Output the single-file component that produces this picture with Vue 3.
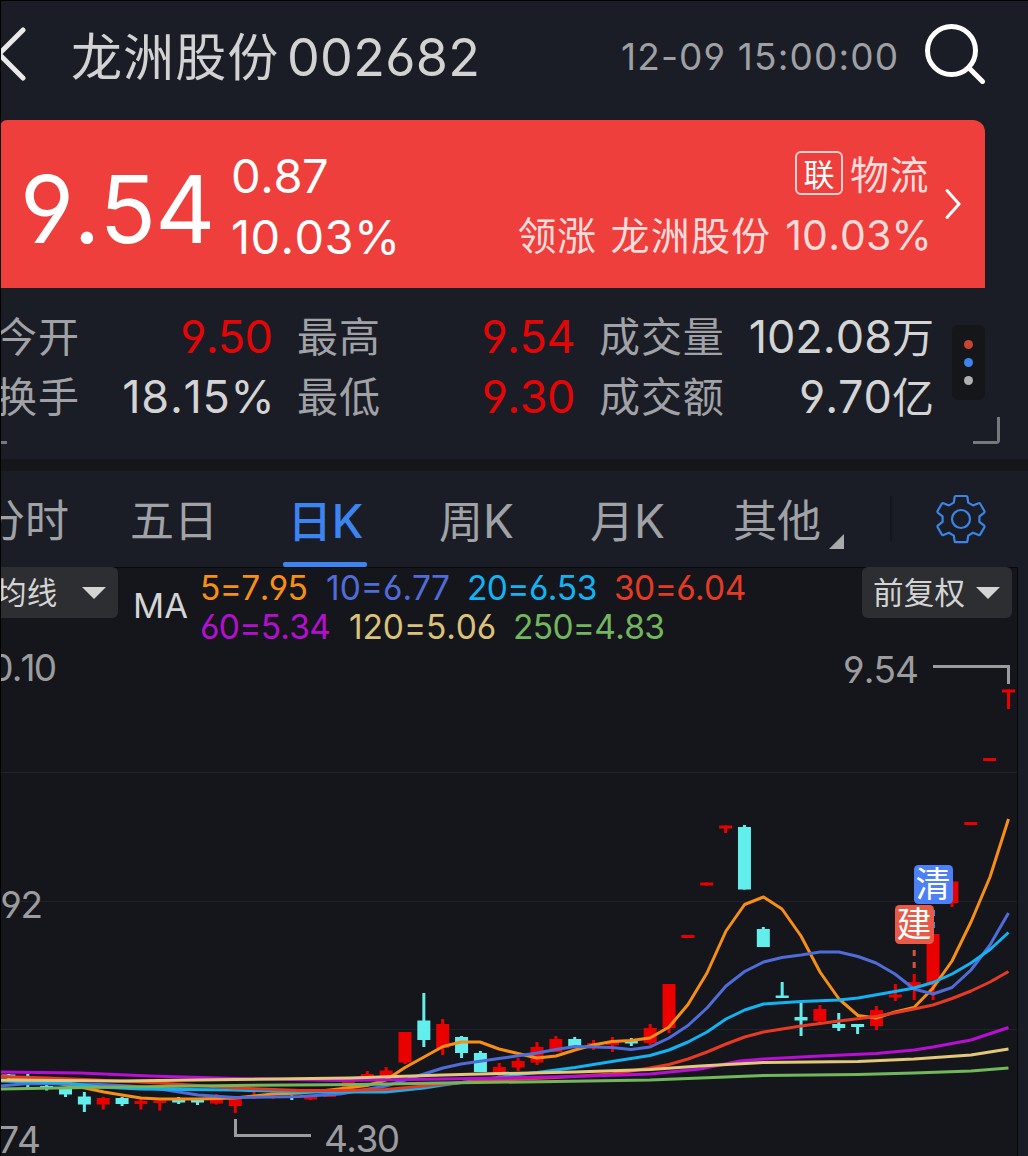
<script setup>
const UP = '#eb0000'
const DOWN = '#63eeee'

const LAST_X = 1008.5
const STEP = 18.86

// [high, bodyTop, bodyBottom, low, rising], oldest first
const raw = [
  [1074, 1074.5, 1077, 1079, 0], [1074, 1078, 1080, 1087, 0], [1084.5, 1086, 1088, 1090.5, 0],
  [1089, 1089, 1094.5, 1097, 0], [1092, 1096.5, 1104.5, 1112, 0], [1097, 1098, 1104.5, 1109.5, 1],
  [1097, 1098, 1104, 1106, 0], [1099, 1101, 1104, 1109.5, 1], [1101, 1100.5, 1103, 1110.5, 1],
  [1097, 1100, 1102.5, 1104, 0], [1100, 1100, 1102.5, 1105, 0], [1094, 1099, 1103.5, 1104.5, 1],
  [1099, 1099, 1106, 1113, 1], [1092, 1095, 1098, 1099, 1], [1095, 1096, 1098, 1099, 1],
  [1095, 1096, 1098, 1100, 0], [1096, 1096, 1099.5, 1100, 1], [1093, 1093, 1097, 1097, 1],
  [1080, 1080, 1090, 1090, 1], [1071, 1074, 1078, 1078, 1], [1067, 1070.5, 1077, 1077, 1],
  [1032, 1032, 1062.5, 1064, 1], [993, 1020.5, 1040, 1047, 0], [1019, 1024, 1048, 1055, 1],
  [1036, 1037, 1053, 1058, 0], [1051, 1053, 1072, 1072, 0], [1063, 1067, 1072, 1076, 1],
  [1058, 1061, 1067.5, 1071, 1], [1042, 1047, 1062.5, 1065, 1], [1036, 1039, 1052, 1052, 1],
  [1037, 1039, 1046, 1048, 0], [1040, 1043, 1046, 1050, 1], [1037, 1042, 1045, 1052, 1],
  [1038, 1041, 1043.5, 1046, 0], [1024, 1028, 1043, 1045, 1], [984, 984, 1028, 1033, 1],
  [935, 935, 938, 938, 1], [882.5, 882.5, 885.5, 885.5, 1], [825.5, 825.5, 828.5, 833, 1],
  [825, 827, 889.5, 889.5, 0], [927, 929, 947, 947, 0], [982, 995.5, 998, 998, 0],
  [1002, 1017, 1020.5, 1036, 0], [1005, 1009, 1021, 1025, 1], [1013, 1024, 1028, 1031, 0],
  [1024, 1024, 1027, 1034, 0], [1006, 1010, 1026, 1030, 1], [984, 994.5, 997.5, 1001, 1],
  [974, 982, 987, 1000, 1], [934, 934, 983, 1000, 1], [881.5, 881.5, 903, 907, 1],
  [822, 822, 825, 825, 1], [758, 758, 761, 761, 1], [689.5, 689.5, 692.5, 709, 1],
]
const candles = raw.map(([high, top, bottom, low, rising], i) => ({
  x: LAST_X - (raw.length - 1 - i) * STEP,
  high, top, bottom, low,
  color: rising ? UP : DOWN,
}))

const averages = [
  { color: '#f78f17', points: '0,1076 28,1079 47,1081 66,1085 85,1088 104,1092 122,1095 141,1098 160,1099 198,1099 235,1098 254,1096 273,1094 300,1093 330,1090 367,1085.5 386,1080 405,1067.5 424,1057 443,1046.5 461,1042 480,1042 499,1049 518,1053.5 537,1058 556,1056 575,1050 593,1045 612,1041.5 631,1040.5 650,1038 669,1027 688,1004.5 707,973 726,931 744.6,904.5 763.5,897 782,909 801,936 820,972 839,999 858,1015.5 876,1018 895,1012 914,1007.5 933,988 952,961 971,922 990,877 1008.5,819' },
  { color: '#506cd8', points: '0,1086 28,1083.5 66,1084 100,1084.5 130,1086 160,1089 198,1095 235,1097.5 300,1096.5 340,1094 386,1086 405,1080 424,1074 443,1068 461,1064 499,1058.5 537,1053 556,1049.5 575,1046.5 612,1047.5 631,1049.5 650,1047 669,1038 688,1025.5 707,1008 726,986 744.6,971.5 763.5,962 782,957.5 801,955 820,952 839,952 858,956.5 876,963 895,974 914,989 933,994 952,987.5 971,970 990,945 1008.5,913' },
  { color: '#13b2f2', points: '0,1081 66,1083 100,1087 140,1089 235,1090 300,1092 386,1092 424,1088 443,1085 480,1080 518,1074.5 537,1072.5 575,1067.5 612,1061.5 650,1055.5 669,1050 688,1042 707,1032 726,1019 744.6,1010 763.5,1004 801,1001.5 839,1000 858,998 895,991.5 914,988 933,982.5 952,974 971,963 990,949.5 1008.5,932.5' },
  { color: '#e63a24', points: '0,1076.5 47,1078 85,1079.5 160,1083 235,1088 300,1090.5 340,1090.5 386,1089.5 424,1086 443,1084 480,1081 556,1077.5 612,1074 650,1068 669,1064.5 688,1059 707,1052 726,1044 744.6,1037 763.5,1032 801,1026 839,1021 876,1016.5 914,1009 933,1005 952,998.5 971,991 990,982 1008.5,971.5' },
  { color: '#b70fd4', points: '0,1072 80,1073 150,1076 235,1078.5 340,1080.5 443,1079 499,1078 575,1076.5 650,1074 700,1069 740,1061 763.5,1059 820,1056 876,1053.5 914,1050 933,1047 971,1040 1008.5,1027.5' },
  { color: '#e3c87c', points: '0,1080 120,1081 235,1079.5 350,1078 443,1075 480,1074 575,1072 650,1069.5 700,1066 763.5,1062.5 858,1061.5 914,1059 971,1055 1008.5,1049' },
  { color: '#72b75c', points: '0,1089 85,1087.5 160,1086.5 235,1085.5 360,1084.5 443,1083 556,1081.5 650,1080 763.5,1075.5 858,1074.5 914,1073 971,1071 1008.5,1068' },
]
</script>

<template>
  <div class="page">
    <header class="top">
      <svg class="back" width="30" height="60" viewBox="0 24 30 60">
        <path d="M23 30L-1 54L23 78" />
      </svg>
      <h1><span class="name">龙洲股份</span><span class="code">002682</span></h1>
      <time>12-09 15:00:00</time>
      <svg class="search" width="64" height="64" viewBox="922 20 64 64">
        <circle cx="951.5" cy="50.5" r="24" />
        <path d="M969 68L982.5 81.5" />
      </svg>
    </header>

    <section class="quote">
      <strong class="price">9.54</strong>
      <div class="change"><span class="delta">0.87</span><span class="pct">10.03%</span></div>
      <div class="sector">
        <div class="line"><i>联</i><b>物流</b></div>
        <div class="lead"><span>领涨</span><span class="who">龙洲股份</span><span class="lead-pct">10.03%</span></div>
      </div>
      <svg class="go" width="20" height="34" viewBox="0 0 20 34">
        <path d="M4 3.5L16 17L4 30.5" />
      </svg>
    </section>

    <section class="stats">
      <div class="cols">
        <div class="col c1">
          <p><label>今开</label><em class="up v950">9.50</em></p>
          <p><label>换手</label><em class="v1815">18.15%</em></p>
        </div>
        <div class="col c2">
          <p><label>最高</label><em class="up v954">9.54</em></p>
          <p><label>最低</label><em class="up v954">9.30</em></p>
        </div>
        <div class="col c3">
          <p><label>成交量</label><em class="vol">102.08<u>万</u></em></p>
          <p><label>成交额</label><em class="amt">9.70<u>亿</u></em></p>
        </div>
      </div>
      <div class="dots"><s class="d1"></s><s class="d2"></s><s class="d3"></s></div>
      <s class="dash"></s>
      <s class="corner"></s>
    </section>

    <nav class="tabs">
      <a class="t1">分时</a>
      <a class="t2">五日</a>
      <a class="t3 on">日<b>K</b></a>
      <a class="t4">周<b>K</b></a>
      <a class="t5">月<b>K</b></a>
      <a class="t6">其他</a>
      <svg class="more" width="15" height="15" viewBox="0 0 15 15"><path d="M15 0V15H0Z" /></svg>
      <s class="rule"></s>
      <svg class="gear" width="52" height="52" viewBox="935 493 52 52">
        <path d="M955.8 496H966.2Q967.2 496 967.4 497L968.2 502.6L973 505.4L978.6 503.2Q979.6 502.8 980.2 503.8L984.4 511Q984.8 512 984 512.8L979.4 516.3V521.9L984 525.4Q984.8 526.2 984.4 527.2L980.2 534.4Q979.6 535.4 978.6 535L973 532.8L968.2 535.6L967.4 541.2Q967.2 542.2 966.2 542.2H955.8Q954.8 542.2 954.6 541.2L953.8 535.6L949 532.8L943.4 535Q942.4 535.4 941.8 534.4L937.6 527.2Q937.2 526.2 938 525.4L942.6 521.9V516.3L938 512.8Q937.2 512 937.6 511L941.8 503.8Q942.4 502.8 943.4 503.2L949 505.4L953.8 502.6L954.6 497Q954.8 496 955.8 496Z" />
        <circle cx="961" cy="519" r="9" />
      </svg>
    </nav>

    <section class="chart">
      <div class="tools">
        <div class="pick left"><span>均线</span><svg width="24" height="12" viewBox="0 0 24 12"><path d="M0 0H24L12 12Z" /></svg></div>
        <span class="ma">MA</span>
        <div class="legend">
          <div class="row">
            <span class="m5">5=7.95</span><span class="m10">10=6.77</span><span class="m20">20=6.53</span><span class="m30">30=6.04</span>
          </div>
          <div class="row">
            <span class="m60">60=5.34</span><span class="m120">120=5.06</span><span class="m250">250=4.83</span>
          </div>
        </div>
        <div class="pick right"><span>前复权</span><svg width="24" height="12" viewBox="0 0 24 12"><path d="M0 0H24L12 12Z" /></svg></div>
      </div>

      <svg class="plot" width="1017" height="506" viewBox="0 650 1017 506">
        <path class="grid" d="M0 772.5H1017M0 901.5H1017M0 1029.5H1017" />
        <g v-for="(c, i) in candles" :key="i" :fill="c.color">
          <rect :x="c.x - 1.5" :y="c.high" width="3" :height="c.low - c.high" />
          <rect :x="c.x - 6.5" :y="c.top" width="13" :height="c.bottom - c.top" />
        </g>
        <path class="buy" d="M914.2 950V969" />
        <path class="sell" d="M933.5 910V929" />
        <polyline v-for="a in averages" :key="a.color" class="avg" :points="a.points" :stroke="a.color" />
        <path class="callout" d="M933 666.5H1008.5V684M235.5 1119V1135.5H311" />
        <g class="axis">
          <text x="-23" y="680.5" textLength="80">10.10</text>
          <text x="-29" y="917.5" textLength="72">6.92</text>
          <text x="-31" y="1153" textLength="72">3.74</text>
          <text x="843" y="682.5" textLength="76">9.54</text>
          <text x="324" y="1151.5" textLength="76">4.30</text>
        </g>
        <rect x="914" y="865" width="39" height="39" rx="4.5" fill="#4c80f6" />
        <rect x="895" y="905" width="39" height="39" rx="4.5" fill="#e85a48" />
        <g class="mark">
          <text x="933" y="897">清</text>
          <text x="914" y="937">建</text>
        </g>
      </svg>
    </section>
  </div>
</template>

<style>
body { background: #1b1d26; }
</style>

<style scoped>
.page {
  position: relative;
  width: 1028px;
  height: 1156px;
  overflow: hidden;
  background: #1b1d26;
  font-family: Inter, "Noto Sans CJK SC", sans-serif;
  font-feature-settings: "cv03", "cv04";
  font-kerning: none;
  white-space: nowrap;
}
.page::after {
  content: "";
  position: absolute;
  inset: 0;
  border-left: 1px solid #000;
  border-top: 1px solid #000;
}
svg { display: block; flex: none; }
s, u, em, i, b, a { text-decoration: none; font-style: normal; font-weight: 400; }
p, h1 { margin: 0; font-weight: 400; }

.top { display: flex; height: 120px; }
.back { margin-top: 24px; fill: none; stroke: #e9e9ea; stroke-width: 5; stroke-linecap: round; }
h1 { margin-left: 41px; width: 550px; line-height: 115px; color: #d2d2d3; font-size: 52px; display: flex; }
.name { width: 216px; font-size: 51px; line-height: 115px; letter-spacing: 1.1px; }
.code { letter-spacing: .3px; }
time { width: 301px; line-height: 113px; font-size: 37px; letter-spacing: 1.15px; color: #9fa0a3; }
.search { margin-top: 20px; fill: none; stroke: #fff; stroke-width: 5; stroke-linecap: round; }

.quote {
  display: flex;
  width: 985px;
  height: 168px;
  border-radius: 7px 12px 0 0;
  background: #ef3f3c;
  color: #fff;
}
.price { width: 211px; padding-left: 20px; font-weight: 400; font-size: 93px; letter-spacing: -.7px; line-height: 179px; }
.change { display: flex; flex-direction: column; width: 200px; padding-top: 25px; font-size: 47px; line-height: 61px; }
.delta { letter-spacing: -.4px; }
.pct { letter-spacing: .4px; }
.sector { flex: 1; display: flex; flex-direction: column; align-items: flex-end; padding-top: 24px; color: #ffdcda; line-height: 61px; }
.line { display: flex; align-items: center; gap: 7px; height: 61px; }
.line i { box-sizing: border-box; width: 48px; height: 44px; margin-bottom: 3px; border: 2px solid #ffd0cd; border-radius: 6px; color: #fff; font-size: 31px; line-height: 43px; text-align: center; }
.line b { font-size: 39px; letter-spacing: .5px; }
.lead { display: flex; font-size: 39px; letter-spacing: .5px; margin-right: -3px; }
.who { margin: 0 14px; letter-spacing: 1.2px; }
.lead-pct { font-size: 41px; letter-spacing: .15px; }
.go { margin: 67px 22px 0 14px; fill: none; stroke: #fff; stroke-width: 3; stroke-linecap: round; }

.stats { position: relative; display: flex; height: 171px; }
.cols { display: flex; padding-top: 19px; width: 952px; }
.col p { display: flex; justify-content: space-between; height: 60px; line-height: 60px; }
.c1 { width: 274px; margin-left: -4px; }
.c2 { width: 276px; margin-left: 27px; }
.c3 { width: 334px; margin-left: 26px; }
label { font-size: 41px; letter-spacing: .9px; color: #a1a2a6; }
em { font-size: 45px; color: #d4d4d4; }
em.up { color: #e30606; }
.v950 { letter-spacing: -.8px; margin-right: -2px; }
.v1815 { letter-spacing: .7px; margin-right: -5.5px; }
.v954 { letter-spacing: -.5px; margin-right: -2px; }
.vol { margin-right: -1px; }
.amt { margin-right: -1px; }
u { font-size: 42px; }
.vol u { letter-spacing: 0; }
.dots { display: flex; flex-direction: column; align-items: center; gap: 9px; width: 33px; height: 60px; padding-top: 15px; margin-top: 37px; border-radius: 6px; background: #15161a; }
.dots s { width: 9px; height: 9px; border-radius: 50%; }
.d1 { background: #cb4332; }
.d2 { background: #3b84f2; }
.d3 { background: #b0b0b4; }
.dash { position: absolute; left: 0; top: 153px; width: 7px; height: 3px; background: #77787c; }
.corner { position: absolute; left: 973px; top: 129px; width: 24px; height: 24px; border: solid #77787c; border-width: 0 3px 3px 0; border-radius: 0 0 4px 0; }

.tabs { position: relative; display: flex; height: 96px; border-top: 12px solid #15161a; line-height: 101px; font-size: 44px; color: #a1a2a6; }
.tabs a { box-sizing: border-box; height: 96px; }
.tabs b { font-size: 46px; }
.t1 { width: 131px; margin-left: -19px; }
.t2 { width: 171px; padding-left: 18px; }
.t3 { position: relative; width: 84px; text-align: center; text-indent: 1px; }
.t3::after { content: ""; position: absolute; left: 0; bottom: 0; width: 84px; height: 5px; border-radius: 2px; background: #3b84f2; }
.on, .on b { color: #3b84f2; font-weight: 500; }
.t4 { width: 151px; margin-left: 71px; text-indent: 1px; }
.t5 { width: 144px; text-indent: 1px; }
.t6 { width: 96px; }
.more { margin-top: 63px; fill: #a9aaad; }
.rule { width: 2px; height: 45px; margin: 25px 43px 0 46px; background: #15161b; }
.gear { margin-top: 22px; fill: none; stroke: #3b84e8; stroke-width: 2.2; stroke-linejoin: round; }

.chart { width: 1017px; height: 589px; background: #15161b; border-right: 1px solid #08090c; box-shadow: inset 0 1px #08090c; }
.tools { display: flex; height: 83px; }
.pick { display: flex; align-items: center; height: 51px; border-radius: 6px; background: #2d2e32; color: #d4d4d4; font-size: 30.5px; letter-spacing: .3px; }
.pick span { margin-bottom: 4px; }
.pick svg { fill: #d4d4d4; }
.left { width: 118px; border-radius: 0 6px 6px 0; gap: 24px; }
.left span { margin-left: -4px; }
.right { width: 139px; padding-left: 11px; gap: 11px; margin-left: auto; margin-right: 5px; }
.ma { margin-left: 15px; width: 67px; line-height: 78px; font-size: 34.5px; color: #d4d4d4; }
.legend { line-height: 39px; font-size: 33.5px; padding-top: 2px; }
.row { display: flex; }
.row span { width: 141px; }
.m5 { color: #f78f17; letter-spacing: -.6px; }
.row .m5 { width: 126px; }
.m10 { color: #506cd8; }
.m20 { color: #13b2f2; letter-spacing: -.6px; }
.row .m20 { width: 147px; }
.m30 { color: #e63a24; letter-spacing: -.6px; }
.m60 { color: #b40fd0; letter-spacing: -.7px; }
.row .m60 { width: 149px; }
.m120 { color: #dcc278; letter-spacing: -.1px; }
.row .m120 { width: 164px; }
.m250 { color: #72b75c; letter-spacing: -.7px; }

.grid { stroke: #222328; stroke-width: 1; }
.avg { fill: none; stroke-width: 3; stroke-linejoin: round; }
.buy, .sell { stroke: #d9503f; stroke-width: 3; stroke-dasharray: 6 6; }
.sell { stroke: #4c80f6; }
.callout { fill: none; stroke: #9c9c9e; stroke-width: 3; }
.axis { font-size: 37px; fill: #9c9c9e; }
.mark { font-family: "Noto Sans CJK SC", sans-serif; font-size: 35px; fill: #fff; text-anchor: middle; }
</style>
